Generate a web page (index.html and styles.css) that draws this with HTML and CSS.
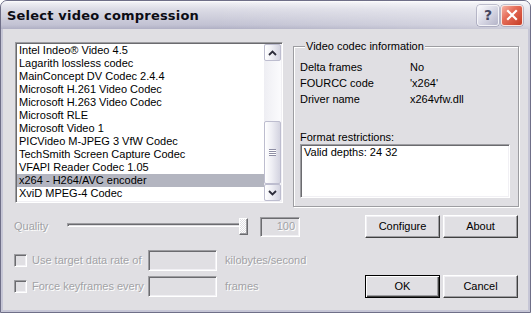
FILE: index.html
```html
<!DOCTYPE html>
<html>
<head>
<meta charset="utf-8">
<title>Select video compression</title>
<link rel="stylesheet" href="styles.css">
</head>
<body>
<div class="win">
  <div class="titlebar">
    <span class="title">Select video compression</span>
    <div class="caption-btns">
      <div class="cbtn help">?</div>
      <div class="cbtn close">
        <svg width="12" height="12" viewBox="0 0 12 12"><path d="M2 2 L10 10 M10 2 L2 10" stroke="#fff" stroke-width="2.2" stroke-linecap="square"/></svg>
      </div>
    </div>
  </div>
  <div class="client">
    <div class="top">
      <div class="listbox">
        <ul class="items">
          <li>Intel Indeo® Video 4.5</li>
          <li>Lagarith lossless codec</li>
          <li>MainConcept DV Codec 2.4.4</li>
          <li>Microsoft H.261 Video Codec</li>
          <li>Microsoft H.263 Video Codec</li>
          <li>Microsoft RLE</li>
          <li>Microsoft Video 1</li>
          <li>PICVideo M-JPEG 3 VfW Codec</li>
          <li>TechSmith Screen Capture Codec</li>
          <li>VFAPI Reader Codec 1.05</li>
          <li class="sel">x264 - H264/AVC encoder</li>
          <li>XviD MPEG-4 Codec</li>
        </ul>
        <div class="vscroll">
          <div class="sb-btn"><svg width="9" height="6" viewBox="0 0 9 6"><path d="M1 5 L4.5 1.5 L8 5" fill="none" stroke="#2c2c3a" stroke-width="1.8"/></svg></div>
          <div class="sb-track">
            <div class="sb-thumb"><span class="grip"></span></div>
          </div>
          <div class="sb-btn"><svg width="9" height="6" viewBox="0 0 9 6"><path d="M1 1 L4.5 4.5 L8 1" fill="none" stroke="#2c2c3a" stroke-width="1.8"/></svg></div>
        </div>
      </div>
      <fieldset class="group">
        <legend>Video codec information</legend>
        <div class="info">
          <span>Delta frames</span><span>No</span>
          <span>FOURCC code</span><span>'x264'</span>
          <span>Driver name</span><span>x264vfw.dll</span>
        </div>
        <div class="fr-label">Format restrictions:</div>
        <div class="fr-box">Valid depths: 24 32</div>
      </fieldset>
    </div>
    <div class="bottom">
      <div class="row row1">
        <div class="left">
          <span class="dis q-label">Quality</span>
          <div class="slider">
            <div class="channel"></div>
            <div class="thumb"></div>
          </div>
          <div class="edit q-edit"><span class="dis">100</span></div>
        </div>
        <div class="btns">
          <div class="btn">Configure</div>
          <div class="btn">About</div>
        </div>
      </div>
      <div class="row row2">
        <div class="left">
          <div class="chk-wrap"><span class="chk"></span><span class="dis">Use target data rate of</span></div>
          <div class="edit v-edit"></div>
          <span class="dis unit">kilobytes/second</span>
        </div>
      </div>
      <div class="row row3">
        <div class="left">
          <div class="chk-wrap"><span class="chk"></span><span class="dis">Force keyframes every</span></div>
          <div class="edit v-edit"></div>
          <span class="dis unit">frames</span>
        </div>
        <div class="btns">
          <div class="btn def">OK</div>
          <div class="btn">Cancel</div>
        </div>
      </div>
    </div>
  </div>
</div>
</body>
</html>
```

FILE: styles.css
```css
* { box-sizing: border-box; }
html, body { margin: 0; padding: 0; background: #ffffff; }
body {
  width: 531px;
  height: 313px;
  overflow: hidden;
  font-family: "Liberation Sans", Arial, sans-serif;
  font-size: 11px;
  line-height: 13px;
  color: #000;
}

.win {
  width: 531px;
  height: 313px;
  border: 1px solid #6f6f88;
  border-radius: 7px 7px 0 0;
  background: #c6c6d6;
  display: flex;
  flex-direction: column;
  padding: 0 2px 2px 2px;
}

.titlebar {
  height: 28px;
  margin: 0 -2px;
  padding: 0 7px 1px 6px;
  display: flex;
  align-items: center;
  justify-content: space-between;
  border-radius: 6px 6px 0 0;
  background:
    linear-gradient(to right, rgba(255,255,255,0) 40%, rgba(255,255,255,0.35) 100%),
    linear-gradient(to bottom, #ffffff 0px, #eeeef3 2px, #dcdce6 8px, #cfcfdc 16px, #c2c2d3 24px, #b0b0c4 28px);
}
.title {
  font-family: "DejaVu Sans", sans-serif;
  font-weight: bold;
  font-size: 13px;
  letter-spacing: 0.2px;
  color: #0c0c14;
  margin-top: 1px;
}
.caption-btns { display: flex; gap: 2px; margin-top: 1px; }
.cbtn {
  width: 22px;
  height: 21px;
  border-radius: 3px;
  border: 1px solid #ffffff;
  display: flex;
  align-items: center;
  justify-content: center;
  box-shadow: 0 0 0 0.5px #8c8ca6;
}
.help {
  background: linear-gradient(135deg, #fafafd 0%, #dcdce8 45%, #b4b4c8 100%);
  font-family: "DejaVu Sans", sans-serif;
  font-weight: bold;
  font-size: 14px;
  color: #45455e;
  border-color: #f4f4f8;
}
.close {
  background: linear-gradient(135deg, #f6b2a4 0%, #e56c58 40%, #c63c26 100%);
  border-color: #fbe6e0;
}

.client {
  flex: 1;
  background: #e0dfe3;
  padding: 11px 0 0 11px;
}

.top { display: flex; align-items: flex-start; }

.listbox {
  margin: 2px 0 0 1px;
  width: 268px;
  height: 161px;
  border: 1px solid;
  border-color: #9d9da1 #ffffff #ffffff #9d9da1;
  box-shadow: inset 1px 1px 0 #6b6b6f, inset -1px -1px 0 #f1f0f4;
  padding: 1px;
  background: #fff;
  display: flex;
}
.items {
  list-style: none;
  margin: 0;
  padding: 0;
  flex: 1;
  background: #fff;
}
.items li { height: 13px; line-height: 13px; padding-left: 2px; white-space: nowrap; }
.items li.sel { background: #b3b5c0; }

.vscroll { width: 17px; display: flex; flex-direction: column; background: linear-gradient(to right, #eeeef3, #fbfbfd); }
.sb-btn, .sb-thumb {
  border: 1px solid #bdbdcf;
  border-radius: 2px;
  background: linear-gradient(to right, #ffffff 0%, #eeeef4 45%, #d3d3e0 100%);
  display: flex;
  align-items: center;
  justify-content: center;
}
.sb-btn { height: 17px; }
.sb-track { flex: 1; display: flex; flex-direction: column; justify-content: flex-end; }
.sb-thumb { height: 63px; }
.grip {
  width: 7px;
  height: 7px;
  background: repeating-linear-gradient(to bottom, #8e8ea4 0 1px, #ffffff 1px 2px);
}

.group {
  margin: 0 0 0 10px;
  width: 226px;
  height: 167px;
  border: 1px solid #9d9da1;
  box-shadow: inset 1px 1px 0 #fff, 1px 1px 0 #fff;
  padding: 8px 0 0 6px;
}
.group legend {
  padding: 0 1px;
  margin-left: 5px;
  line-height: 13px;
  background: #e0dfe3;
}
.info {
  display: grid;
  grid-template-columns: 110px auto;
  row-gap: 3px;
}
.fr-label { margin-top: 25px; }
.fr-box {
  width: 210px;
  height: 54px;
  background: #fff;
  border: 1px solid;
  border-color: #9d9da1 #ffffff #ffffff #9d9da1;
  box-shadow: inset 1px 1px 0 #6b6b6f, inset -1px -1px 0 #f1f0f4;
  padding: 1px 3px;
}

.bottom { margin-top: 8px; display: flex; flex-direction: column; }
.row { display: flex; align-items: center; }
.row .left { width: 351px; display: flex; align-items: center; }
.row1 { height: 23px; }
.row2 { height: 21px; margin-top: 12px; }
.row3 { height: 23px; margin-top: 4px; }

.dis { color: #a2a2a6; text-shadow: 1px 1px 0 #ffffff; }
.q-label { width: 53px; }
.slider { position: relative; width: 181px; height: 17px; }
.channel {
  position: absolute;
  left: 0; right: 2px; top: 5px;
  height: 4px;
  border: 1px solid;
  border-color: #9d9da1 #ffffff #ffffff #9d9da1;
  box-shadow: inset 1px 1px 0 #6b6b6f;
  background: #e0dfe3;
}
.thumb {
  position: absolute;
  left: 172px; top: 0;
  width: 9px; height: 17px;
  border: 1px solid;
  border-color: #ffffff #6b6b6f #6b6b6f #ffffff;
  box-shadow: inset -1px -1px 0 #9d9da1;
  background-color: #e0dfe3;
  background-image: repeating-conic-gradient(#ffffff 0 25%, #e0dfe3 0 50%);
  background-size: 2px 2px;
}
.edit {
  border: 1px solid;
  border-color: #9d9da1 #ffffff #ffffff #9d9da1;
  box-shadow: inset 1px 1px 0 #6b6b6f, inset -1px -1px 0 #f1f0f4;
  background: #e0dfe3;
}
.q-edit {
  margin-left: 12px;
  width: 40px;
  height: 20px;
  display: flex;
  align-items: center;
  justify-content: flex-end;
  padding-right: 4px;
}
.chk-wrap { width: 134px; display: flex; align-items: center; gap: 5px; }
.chk {
  width: 13px; height: 13px;
  border: 1px solid;
  border-color: #9d9da1 #ffffff #ffffff #9d9da1;
  box-shadow: inset 1px 1px 0 #6b6b6f, inset -1px -1px 0 #f1f0f4;
  background: #e0dfe3;
}
.v-edit { width: 69px; height: 21px; }
.unit { margin-left: 8px; }

.btns { display: flex; gap: 3px; }
.btn {
  width: 75px;
  height: 23px;
  display: flex;
  align-items: center;
  justify-content: center;
  background: #e0dfe3;
  border: 1px solid;
  border-color: #ffffff #404040 #404040 #ffffff;
  box-shadow: inset -1px -1px 0 #9d9da1, inset 1px 1px 0 #f1f0f4;
}
.btn.def {
  border: 1px solid #000;
  box-shadow: inset 1px 1px 0 #ffffff, inset -1px -1px 0 #404040, inset -2px -2px 0 #9d9da1;
}
```
